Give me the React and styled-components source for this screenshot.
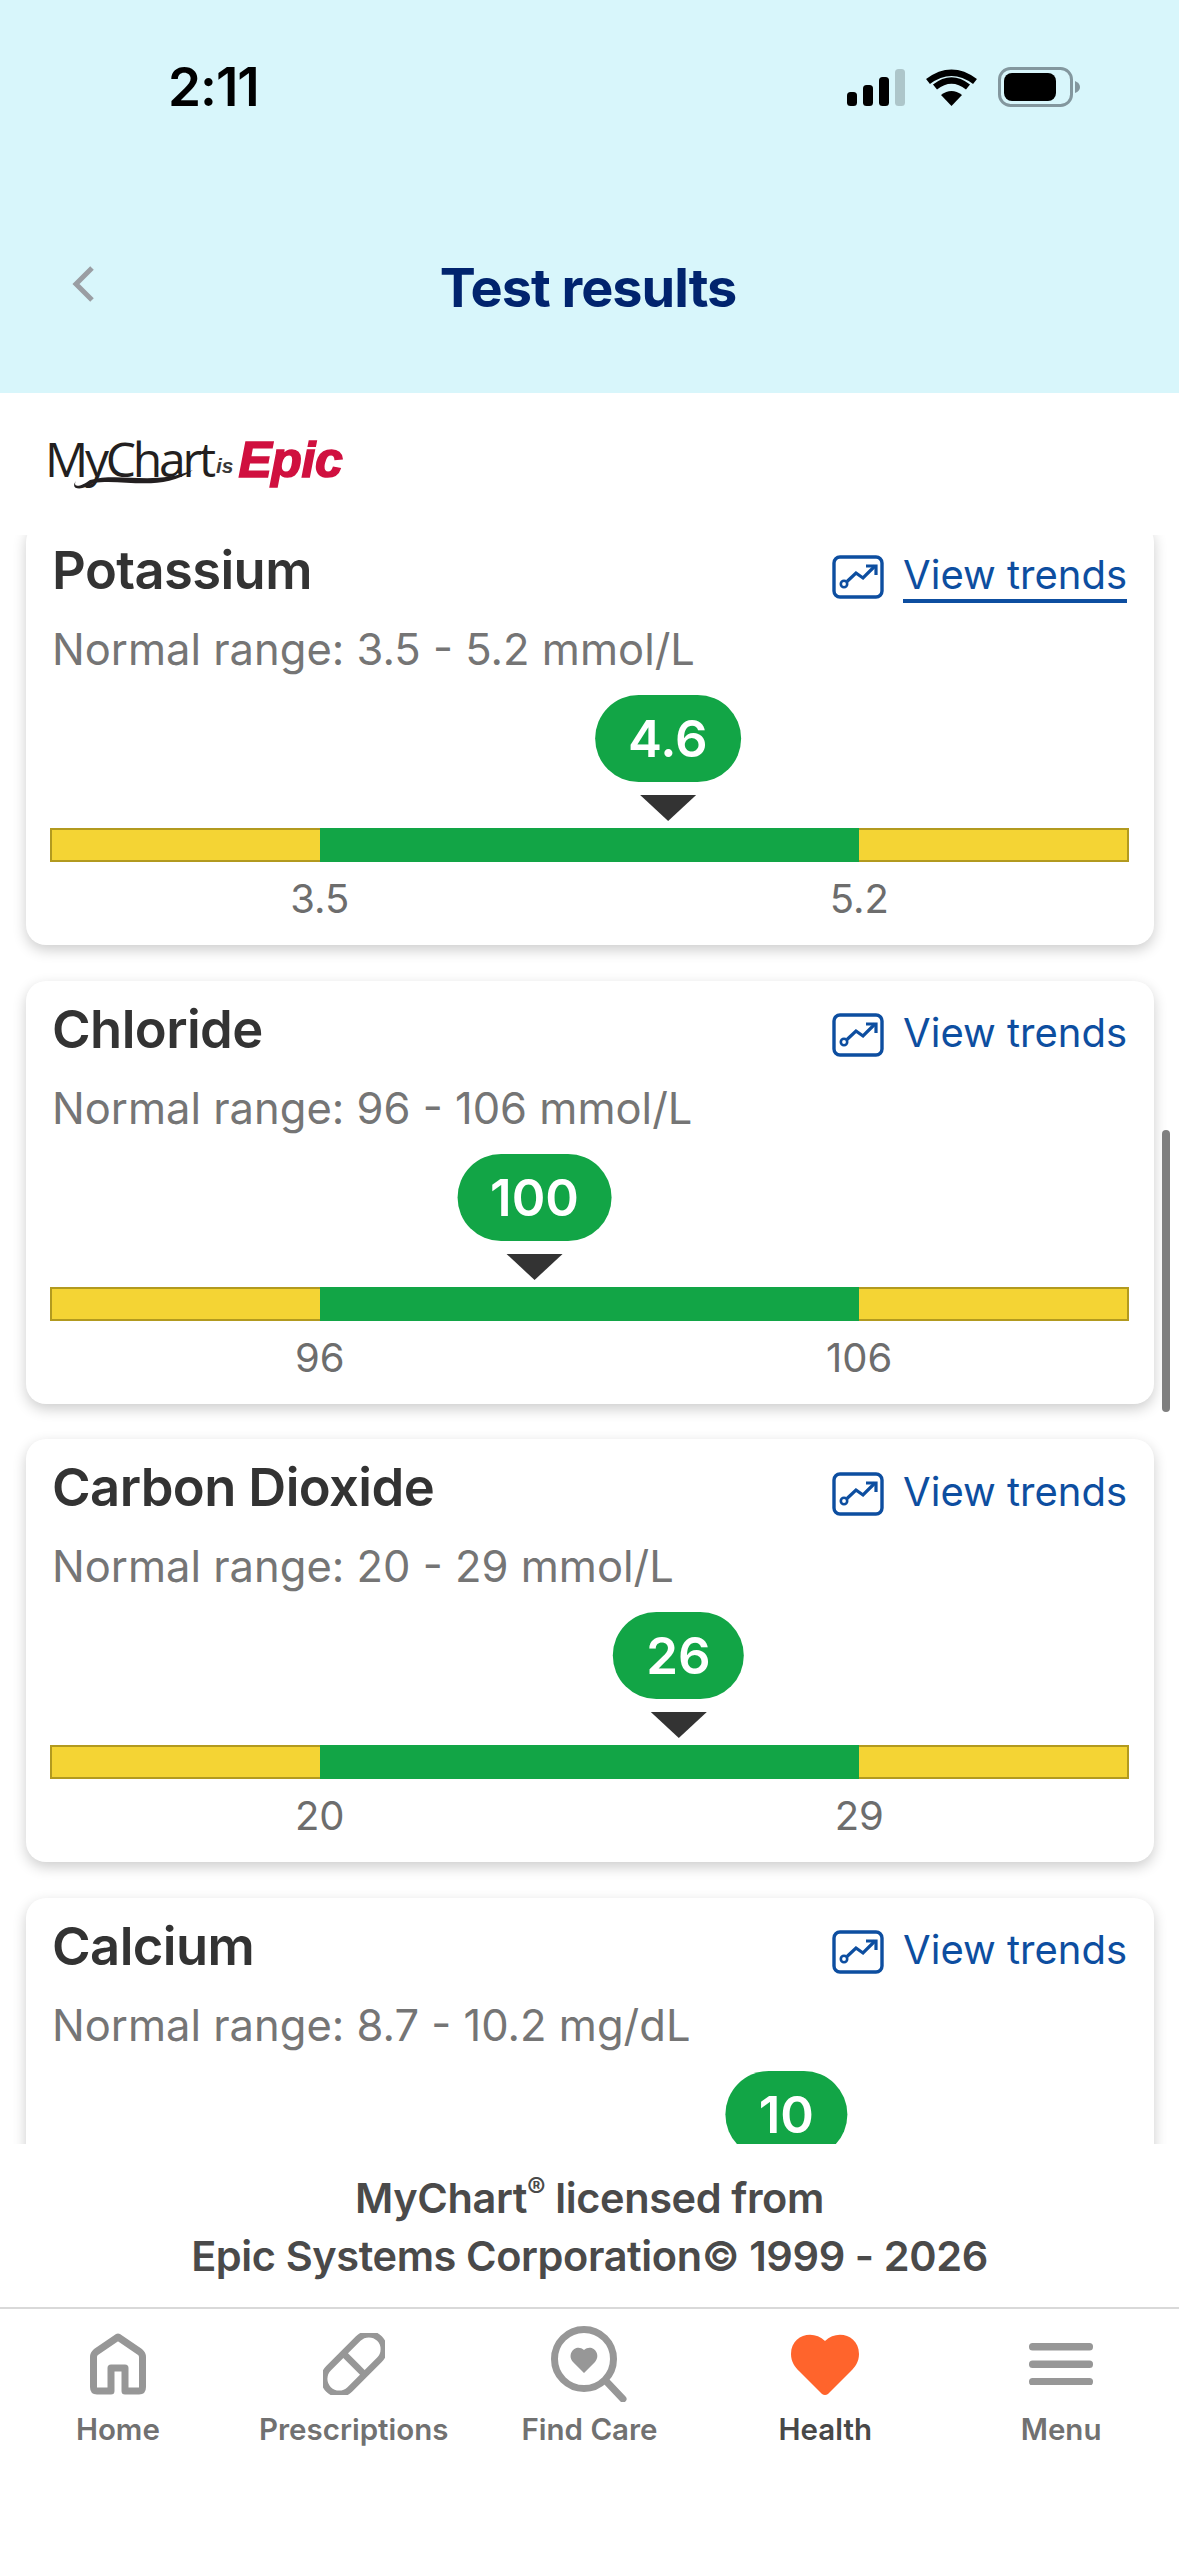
import React from 'react';
import styled, { createGlobalStyle } from 'styled-components';

const GlobalStyle = createGlobalStyle`
  html, body {
    margin: 0;
    padding: 0;
    background: #ffffff;
  }
  body {
    font-family: Inter, "Liberation Sans", sans-serif;
  }
`;

const Page = styled.div`
  width: 1179px;
  height: 2556px;
  display: flex;
  flex-direction: column;
  background: #ffffff;
  overflow: hidden;
`;

const Header = styled.header`
  height: 393px;
  flex: none;
  background: #d8f6fb;
  display: flex;
  flex-direction: column;
`;

const StatusBar = styled.div`
  height: 68px;
  margin-top: 53px;
  display: flex;
  align-items: center;
  justify-content: space-between;
  padding: 0 99px 0 168px;
`;

const Clock = styled.span`
  font-size: 53px;
  font-weight: 600;
  color: #000000;
  letter-spacing: -1px;
`;

const StatusIcons = styled.div`
  display: flex;
  align-items: center;
  gap: 21px;
`;

const NavRow = styled.div`
  margin-top: 136px;
  height: 60px;
  display: flex;
  align-items: center;
  justify-content: center;
  position: relative;
  padding-right: 3px;
`;

const BackButton = styled.span`
  position: absolute;
  left: 70px;
  top: 8px;
  display: flex;
`;

const Title = styled.h1`
  margin: 0;
  font-size: 54px;
  font-weight: 700;
  color: #01246e;
  letter-spacing: -1px;
`;

const LogoBand = styled.div`
  height: 142px;
  flex: none;
  display: flex;
  align-items: flex-start;
  padding: 41px 0 0 45px;
  box-sizing: border-box;
  gap: 3px;
`;

const MyChartWord = styled.span`
  position: relative;
  font-family: "Open Sans", sans-serif;
  font-size: 48px;
  line-height: 50px;
  font-weight: 500;
  letter-spacing: -3.2px;
  color: #231f20;
  svg {
    position: absolute;
    left: 26px;
    top: 35px;
  }
`;

const IsWord = styled.span`
  font-family: "Liberation Sans", sans-serif;
  font-size: 21px;
  line-height: 64px;
  font-weight: 700;
  font-style: italic;
  color: #3a3a3a;
`;

const EpicWord = styled.span`
  margin-left: 2px;
  font-family: "Liberation Sans", sans-serif;
  font-size: 50px;
  line-height: 52px;
  font-weight: 700;
  font-style: italic;
  letter-spacing: -0.4px;
  color: #d0103f;
  -webkit-text-stroke: 1.6px #d0103f;
`;

const ScrollArea = styled.main`
  position: relative;
  flex: 1;
  min-height: 0;
  overflow: hidden;
`;

const CardList = styled.div`
  display: flex;
  flex-direction: column;
  gap: 35.5px;
  margin-top: -13px;
  padding: 0 25px 0 26px;
`;

const Scrollbar = styled.div`
  position: absolute;
  right: 9px;
  top: 595px;
  width: 8px;
  height: 282px;
  border-radius: 4px;
  background: #7f7f7f;
`;

const CardBox = styled.section`
  height: 423px;
  flex: none;
  box-sizing: border-box;
  background: #ffffff;
  border-radius: 20px;
  box-shadow: 0 5px 14px rgba(0, 0, 0, 0.2);
  padding: 18px 25px 24px 24px;
`;

const CardTop = styled.div`
  display: flex;
  justify-content: space-between;
  align-items: center;
  height: 60px;
  padding: 0 2px;
`;

const TestName = styled.h2`
  margin: 0;
  font-size: 52.5px;
  line-height: 60px;
  font-weight: 600;
  color: #333333;
  letter-spacing: -0.6px;
`;

const TrendsLink = styled.a`
  display: flex;
  align-items: center;
  gap: 19px;
  margin-top: 13px;
  font-size: 40px;
  color: #0d4ea0;
`;

const TrendsText = styled.span`
  line-height: 48px;
  border-bottom: ${(p) => (p.$underlined ? '4px solid #0d4ea0' : '4px solid transparent')};
`;

const RangeText = styled.p`
  margin: 23px 0 0;
  padding: 0 2px;
  font-size: 43.5px;
  line-height: 52px;
  color: #757575;
`;

const Gauge = styled.div`
  position: relative;
  margin-top: 20px;
  padding-top: 133px;
`;

const Marker = styled.div`
  position: absolute;
  top: 0;
  margin-left: -1px;
  transform: translateX(-50%);
  display: flex;
  flex-direction: column;
  align-items: center;
`;

const Bubble = styled.div`
  height: 87px;
  padding: 0 33px;
  display: flex;
  align-items: center;
  border-radius: 44px;
  background: #12a546;
  color: #ffffff;
  font-size: 51px;
  font-weight: 600;
`;

const Pointer = styled.div`
  width: 0;
  height: 0;
  margin-top: 13px;
  border-left: 28px solid transparent;
  border-right: 28px solid transparent;
  border-top: 26px solid #333333;
`;

const Bar = styled.div`
  height: 34px;
  display: flex;
`;

const BarSegment = styled.div`
  flex: 0 0 ${(p) => (p.$normal ? '50%' : '25%')};
  box-sizing: border-box;
  background: ${(p) => (p.$normal ? '#12a546' : '#f4d434')};
  border-style: solid;
  border-color: ${(p) => (p.$normal ? '#12a546' : '#b29a1f')};
  border-width: 2px ${(p) => (p.$side === 'right' ? '2px' : 0)} 2px ${(p) => (p.$side === 'left' ? '2px' : 0)};
`;

const BarLabels = styled.div`
  display: grid;
  grid-template-columns: 1fr 1fr;
  margin-top: 15px;
  text-align: center;
  font-size: 40px;
  line-height: 44px;
  color: #6d6d6d;
`;

const Licence = styled.div`
  height: 163px;
  flex: none;
  box-sizing: border-box;
  padding-top: 25px;
  text-align: center;
  font-size: 41.5px;
  line-height: 58px;
  font-weight: 600;
  color: #4a4a4a;
  letter-spacing: -0.4px;
  sup {
    font-size: 28px;
    line-height: 0;
  }
`;

const TabBar = styled.nav`
  height: 249px;
  flex: none;
  box-sizing: border-box;
  display: grid;
  grid-template-columns: repeat(5, 1fr);
  border-top: 2px solid #d9d9d9;
`;

const Tab = styled.div`
  display: flex;
  flex-direction: column;
  align-items: center;
`;

const TabIcon = styled.div`
  height: 90px;
  margin-top: 10px;
  display: flex;
  align-items: center;
  justify-content: center;
`;

const TabLabel = styled.span`
  margin-top: 2px;
  font-size: 29.5px;
  line-height: 36px;
  font-weight: 600;
  color: ${(p) => (p.$active ? '#484848' : '#717171')};
`;

const SignalIcon = () => (
  <svg width="58" height="37" viewBox="0 0 58 37">
    <rect x="0" y="23" width="10" height="14" rx="3.5" fill="#000" />
    <rect x="16" y="16" width="10" height="21" rx="3.5" fill="#000" />
    <rect x="32" y="8" width="10" height="29" rx="3.5" fill="#000" />
    <rect x="48" y="0" width="10" height="37" rx="3.5" fill="#adc6ca" />
  </svg>
);

const WifiIcon = () => (
  <svg width="51" height="37" viewBox="0 0 51 37">
    <path d="M25.5 37 L15 26 Q25.5 18 36 26 Z" fill="#000" />
    <path d="M9 18 Q25.5 5 42 18" fill="none" stroke="#000" strokeWidth="6.5" />
    <path d="M2 10.5 Q25.5 -7 49 10.5" fill="none" stroke="#000" strokeWidth="6.5" transform="translate(0 2)" />
  </svg>
);

const BatteryIcon = () => (
  <svg width="82" height="40" viewBox="0 0 82 40">
    <rect x="1.5" y="1.5" width="72" height="37" rx="11" fill="none" stroke="#83979e" strokeWidth="3" />
    <rect x="6" y="6" width="52" height="28" rx="8" fill="#000" />
    <path d="M77 14 Q82 16 82 20 Q82 24 77 26 Z" fill="#83979e" />
  </svg>
);

const ChevronLeft = () => (
  <svg width="26" height="38" viewBox="0 0 26 38">
    <path d="M22 3 L6 19 L22 35" fill="none" stroke="#9a9ea3" strokeWidth="5" />
  </svg>
);

const Swoosh = () => (
  <svg width="130" height="22" viewBox="0 0 130 22">
    <path d="M5 12 C1 19 10 18 19 11 C48 3 85 17 122 1 C90 24 52 9 22 14 C12 22 -2 21 5 12 Z" fill="#231f20" />
  </svg>
);

const TrendIcon = () => (
  <svg width="52" height="44" viewBox="0 0 52 44" fill="none" stroke="#0d4ea0">
    <rect x="2" y="2" width="48" height="40" rx="6" strokeWidth="3.4" />
    <circle cx="12" cy="29" r="3.2" strokeWidth="2.6" />
    <path d="M15 26.5 L24 18 L31 23 L43 11" strokeWidth="3.2" />
    <path d="M34 11 H44 V20" strokeWidth="3.2" />
  </svg>
);

const HomeIcon = () => (
  <svg width="56" height="62" viewBox="0 0 56 62" fill="none" stroke="#979797" strokeWidth="7" strokeLinejoin="round">
    <path d="M21 58 H7 Q3.5 58 3.5 54 V24 Q3.5 21 6 19 L28 4 L50 19 Q52.5 21 52.5 24 V54 Q52.5 58 49 58 H35 V35 H21 Z" />
  </svg>
);

const PillIcon = () => (
  <svg width="62" height="62" viewBox="0 0 62 62" fill="none" stroke="#979797" strokeWidth="6.5">
    <g transform="rotate(-45 31 31)">
      <rect x="-5" y="16" width="72" height="30" rx="15" />
      <path d="M31 16 V46" />
    </g>
  </svg>
);

const FindCareIcon = () => (
  <svg width="76" height="76" viewBox="0 0 76 76" fill="none" stroke="#979797" strokeWidth="7">
    <circle cx="33" cy="33" r="29.5" />
    <path d="M55 55 L72 73" strokeLinecap="round" />
    <path d="M33 47 L22 36 C15 28 25 17 33 24 C41 17 51 28 44 36 Z" fill="#979797" stroke="none" />
  </svg>
);

const HeartIcon = () => (
  <svg width="68" height="61" viewBox="0 0 68 61">
    <path d="M34 7 C46 -5 68 1 68 20 C68 28 64 33 60 37 L37 60 Q34 62 31 60 L8 37 C4 33 0 28 0 20 C0 1 22 -5 34 7 Z" fill="#ff642c" />
  </svg>
);

const MenuIcon = () => (
  <svg width="64" height="42" viewBox="0 0 64 42" fill="#979797">
    <rect x="0" y="0" width="64" height="7.5" rx="3.5" />
    <rect x="0" y="17.5" width="64" height="7.5" rx="3.5" />
    <rect x="0" y="35" width="64" height="7.5" rx="3.5" />
  </svg>
);

const results = [
  { name: 'Potassium', unit: 'mmol/L', low: 3.5, high: 5.2, lowText: '3.5', highText: '5.2', value: 4.6, valueText: '4.6', underlined: true },
  { name: 'Chloride', unit: 'mmol/L', low: 96, high: 106, lowText: '96', highText: '106', value: 100, valueText: '100' },
  { name: 'Carbon Dioxide', unit: 'mmol/L', low: 20, high: 29, lowText: '20', highText: '29', value: 26, valueText: '26' },
  { name: 'Calcium', unit: 'mg/dL', low: 8.7, high: 10.2, lowText: '8.7', highText: '10.2', value: 10, valueText: '10' },
];

const tabs = [
  { label: 'Home', icon: <HomeIcon /> },
  { label: 'Prescriptions', icon: <PillIcon /> },
  { label: 'Find Care', icon: <FindCareIcon /> },
  { label: 'Health', icon: <HeartIcon />, active: true },
  { label: 'Menu', icon: <MenuIcon /> },
];

const ResultCard = ({ result }) => {
  // normal range fills the middle half of the bar
  const left = 25 + ((result.value - result.low) / (result.high - result.low)) * 50;

  return (
    <CardBox>
      <CardTop>
        <TestName>{result.name}</TestName>
        <TrendsLink>
          <TrendIcon />
          <TrendsText $underlined={result.underlined}>View trends</TrendsText>
        </TrendsLink>
      </CardTop>
      <RangeText>
        Normal range: {result.lowText} - {result.highText} {result.unit}
      </RangeText>
      <Gauge>
        <Marker style={{ left: `${left}%` }}>
          <Bubble>{result.valueText}</Bubble>
          <Pointer />
        </Marker>
        <Bar>
          <BarSegment $side="left" />
          <BarSegment $normal />
          <BarSegment $side="right" />
        </Bar>
        <BarLabels>
          <span>{result.lowText}</span>
          <span>{result.highText}</span>
        </BarLabels>
      </Gauge>
    </CardBox>
  );
};

const App = () => (
  <Page>
    <GlobalStyle />
    <Header>
      <StatusBar>
        <Clock>2:11</Clock>
        <StatusIcons>
          <SignalIcon />
          <WifiIcon />
          <BatteryIcon />
        </StatusIcons>
      </StatusBar>
      <NavRow>
        <BackButton>
          <ChevronLeft />
        </BackButton>
        <Title>Test results</Title>
      </NavRow>
    </Header>
    <LogoBand>
      <MyChartWord>
        MyChart
        <Swoosh />
      </MyChartWord>
      <IsWord>is</IsWord>
      <EpicWord>Epic</EpicWord>
    </LogoBand>
    <ScrollArea>
      <CardList>
        {results.map((result) => (
          <ResultCard key={result.name} result={result} />
        ))}
      </CardList>
      <Scrollbar />
    </ScrollArea>
    <Licence>
      MyChart<sup>®</sup> licensed from
      <br />
      Epic Systems Corporation© 1999 - 2026
    </Licence>
    <TabBar>
      {tabs.map((tab) => (
        <Tab key={tab.label}>
          <TabIcon>{tab.icon}</TabIcon>
          <TabLabel $active={tab.active}>{tab.label}</TabLabel>
        </Tab>
      ))}
    </TabBar>
  </Page>
);

export default App;
